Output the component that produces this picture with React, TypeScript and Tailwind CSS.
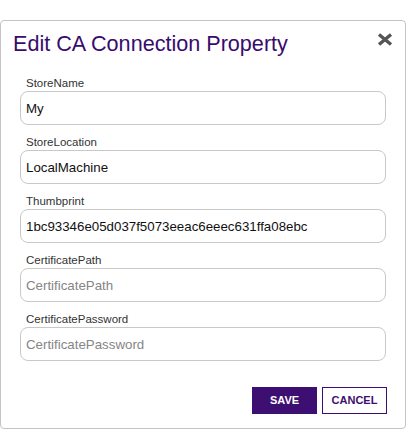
import React from "react";

const fields = [
  { label: "StoreName", value: "My" },
  { label: "StoreLocation", value: "LocalMachine" },
  { label: "Thumbprint", value: "1bc93346e05d037f5073eeac6eeec631ffa08ebc" },
  { label: "CertificatePath", value: "" },
  { label: "CertificatePassword", value: "" },
];

export default function App() {
  return (
    <div className="w-[407px] h-[430px] bg-white pt-[20px] font-['Liberation_Sans',Arial,sans-serif]">
      <div className="w-[406px] h-[409px] border border-[#c4c4c4] rounded-[4px] pt-[9px] flex flex-col">
        <div className="flex items-start justify-between pl-[12px] pr-[12px]">
          <h1 className="h-[28px] leading-[28px] text-[21.6px] text-[#380c6c]">
            Edit CA Connection Property
          </h1>
          <button className="mt-[3px] w-[16px] h-[13px] flex items-center justify-center" aria-label="close">
            <svg width="16" height="13" viewBox="0 0 16 13">
              <path d="M2 1.5 L14 11.5 M14 1.5 L2 11.5" stroke="#555555" strokeWidth="3.4" strokeLinecap="butt" />
            </svg>
          </button>
        </div>
        <div className="mt-[18px] px-[19px] flex flex-col gap-[10px]">
          {fields.map((f) => (
            <div key={f.label} className="flex flex-col">
              <label className="h-[14px] leading-[14px] text-[11.5px] text-[#333333] pl-[6px] mb-[1px]">
                {f.label}
              </label>
              <input
                readOnly
                value={f.value}
                placeholder={f.label}
                className="h-[34px] w-full border border-[#c8c8c8] rounded-[8px] px-[5px] text-[13.3px] text-[#111111] placeholder:text-[#858585] outline-none bg-white"
              />
            </div>
          ))}
        </div>
        <div className="mt-[26px] flex justify-end gap-[5px] pr-[18px]">
          <button className="w-[65px] h-[27px] bg-[#3d0f72] text-white text-[11px] font-bold">
            SAVE
          </button>
          <button className="w-[65px] h-[27px] border border-[#3d0f72] text-[#3d0f72] text-[11px] font-bold bg-white">
            CANCEL
          </button>
        </div>
      </div>
    </div>
  );
}
